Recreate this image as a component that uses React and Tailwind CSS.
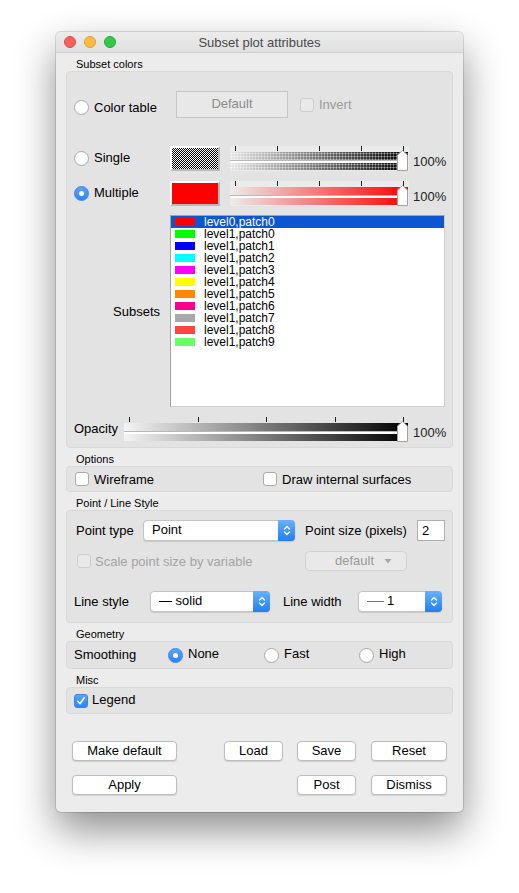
import React from "react";

function Radio({ checked }) {
  if (checked) {
    return (
      <div className="w-[15px] h-[15px] rounded-full bg-[linear-gradient(#5ba5fb,#2d84f6)] border border-[#3a84e8] flex items-center justify-center shrink-0">
        <div className="w-[5px] h-[5px] rounded-full bg-white" />
      </div>
    );
  }
  return (
    <div className="w-[15px] h-[15px] rounded-full bg-white border border-[#a9a9a9] shadow-[inset_0_-1px_0_rgba(0,0,0,0.04)] shrink-0" />
  );
}

function Checkbox({ checked, disabled, cls = "" }) {
  if (checked) {
    return (
      <div className={"w-[14px] h-[14px] rounded-[3px] bg-[linear-gradient(#5ba5fb,#2d84f6)] border border-[#3a84e8] flex items-center justify-center shrink-0 " + cls}>
        <svg width="10" height="10" viewBox="0 0 10 10">
          <path d="M1.8 5.2 L4 7.8 L8.3 1.8" fill="none" stroke="white" strokeWidth="1.5" strokeLinecap="round" strokeLinejoin="round" />
        </svg>
      </div>
    );
  }
  return (
    <div
      className={
        "w-[14px] h-[14px] rounded-[3px] border shrink-0 " +
        (disabled ? "bg-[#e9e9e9] border-[#cdcdcd] " : "bg-white border-[#acacac] ") +
        cls
      }
    />
  );
}

function Stepper() {
  return (
    <div className="w-[17px] self-stretch rounded-r-[4px] bg-[linear-gradient(#69b1fb,#1f7ff6)] flex items-center justify-center -mr-px -my-px">
      <svg width="8" height="13" viewBox="0 0 8 13">
        <path d="M1.5 5 L4 2.5 L6.5 5" fill="none" stroke="white" strokeWidth="1.2" strokeLinecap="round" strokeLinejoin="round" />
        <path d="M1.5 8 L4 10.5 L6.5 8" fill="none" stroke="white" strokeWidth="1.2" strokeLinecap="round" strokeLinejoin="round" />
      </svg>
    </div>
  );
}

function Combo({ w, children }) {
  return (
    <div className={"h-[21px] flex items-center bg-white rounded-[4px] border border-[#c4c4c4] shadow-[0_1px_1px_rgba(0,0,0,0.12)] " + w}>
      <div className="flex-1 flex items-center text-[13px] leading-[15px] text-black pl-[8px] pb-[3px]">{children}</div>
      <Stepper />
    </div>
  );
}

function Handle() {
  return (
    <svg className="absolute right-0 top-[-2px]" width="11" height="21" viewBox="0 0 11 21">
      <polygon points="0.5,5 5.5,0.5 10.5,5 10.5,20.5 0.5,20.5" fill="#fdfdfd" stroke="#a2a2a2" strokeWidth="1" />
    </svg>
  );
}

function Slider({ w, band, light }) {
  return (
    <div className={"flex flex-col h-[25px] " + w + (light ? " bg-[#ebebeb]" : "")}>
      <div className="h-[5px] flex justify-between px-[5px]">
        <div className="w-px h-[5px] bg-[#222]" />
        <div className="w-px h-[5px] bg-[#222]" />
        <div className="w-px h-[5px] bg-[#222]" />
        <div className="w-px h-[5px] bg-[#222]" />
        <div className="w-px h-[5px] bg-[#222]" />
      </div>
      <div className="relative mt-[1px] mr-[1px] flex flex-col">
        <div className={"h-[8px] " + band} />
        <div className="h-[3px] bg-white border-t border-[#b8b8b8]" />
        <div className={"h-[7px] " + band} />
        <Handle />
      </div>
    </div>
  );
}

function Swatch({ inner }) {
  return (
    <div className="w-[50px] h-[25px] border-2 border-t-white border-l-white border-r-[#b9b9b9] border-b-[#b9b9b9] shrink-0">
      <div className={"w-full h-full " + inner} />
    </div>
  );
}

function Button({ w, children, cls = "" }) {
  return (
    <div className={"h-[20px] bg-white rounded-[4px] border border-[#bdbdbd] shadow-[0_1px_1px_rgba(0,0,0,0.12)] flex items-center justify-center text-[13px] leading-[15px] text-black pb-[2px] " + w + " " + cls}>
      {children}
    </div>
  );
}

function GroupLabel({ children }) {
  return (
    <div className="h-[18px] flex items-end pl-[10px]">
      <span className="text-[11px] leading-[13px] text-black">{children}</span>
    </div>
  );
}

const items = [
  ["level0,patch0", "bg-[#ff0000]"],
  ["level1,patch0", "bg-[#00ff00]"],
  ["level1,patch1", "bg-[#0000ff]"],
  ["level1,patch2", "bg-[#00ffff]"],
  ["level1,patch3", "bg-[#ff00ff]"],
  ["level1,patch4", "bg-[#ffff00]"],
  ["level1,patch5", "bg-[#ff8800]"],
  ["level1,patch6", "bg-[#ff0088]"],
  ["level1,patch7", "bg-[#a8a8a8]"],
  ["level1,patch8", "bg-[#ff4444]"],
  ["level1,patch9", "bg-[#66ff66]"],
];

export default function App() {
  const box = "bg-[#e3e3e3] border border-[#d9d9d9] rounded-[4px]";
  return (
    <div className="min-h-[893px] bg-white pt-[32px] pl-[56px] font-['Liberation_Sans',Arial,sans-serif] text-black">
      <div className="w-[407px] h-[780px] rounded-[5px] bg-[#ececec] shadow-[0_0_0_1px_rgba(0,0,0,0.12),0_18px_40px_rgba(0,0,0,0.45)] flex flex-col overflow-hidden">
        {/* title bar */}
        <div className="h-[21px] shrink-0 border-b border-[#cfcfcf] bg-[linear-gradient(#ececec,#e0e0e0)] flex items-center relative">
          <div className="flex items-center gap-[8px] pl-[8px]">
            <div className="w-[12px] h-[12px] rounded-full bg-[#fc605c] border border-[#de4a45]" />
            <div className="w-[12px] h-[12px] rounded-full bg-[#fdbc40] border border-[#dea236]" />
            <div className="w-[12px] h-[12px] rounded-full bg-[#34c84a] border border-[#27aa35]" />
          </div>
          <div className="absolute inset-0 flex items-center justify-center text-[13px] leading-[15px] text-[#4a4a4a] pt-[1px] pointer-events-none">
            Subset plot attributes
          </div>
        </div>

        <div className="px-[10px] flex flex-col">
          <GroupLabel>Subset colors</GroupLabel>
          <div className={box + " h-[377px] flex flex-col pl-[7px]"}>
            {/* color table row */}
            <div className="mt-[19px] h-[27px] flex items-start">
              <div className="w-[96px] flex items-center gap-[5px] mt-[9px]">
                <Radio />
                <span className="text-[13px] leading-[15px]">Color table</span>
              </div>
              <div className="w-[112px] h-[27px] border border-[#c6c6c6] bg-[#e8e8e8] flex items-center justify-center text-[13px] leading-[15px] text-[#8c8c8c] pb-[2px] ml-[6px]">
                Default
              </div>
              <div className="flex items-center gap-[5px] ml-[12px] mt-[6px]">
                <Checkbox disabled />
                <span className="text-[13px] leading-[15px] text-[#9a9a9a]">Invert</span>
              </div>
            </div>

            {/* single row */}
            <div className="mt-[28px] h-[25px] flex items-center">
              <div className="w-[96px] flex items-center gap-[5px]">
                <Radio />
                <span className="text-[13px] leading-[15px] -mt-[3px]">Single</span>
              </div>
              <Swatch inner="bg-[image:repeating-conic-gradient(#000_0%_25%,#fff_0%_50%)] bg-[length:2px_2px]" />
              <div className="ml-[10px]">
                <Slider
                  w="w-[179px]"
                  light
                  band="bg-[image:radial-gradient(circle,rgba(255,255,255,0.6)_0.9px,transparent_1.1px),linear-gradient(to_right,#e6e6e6,#000)] bg-[length:3px_3px,100%_100%]"
                />
              </div>
              <span className="ml-[4px] mt-[6px] text-[13px] leading-[15px] text-[#222]">100%</span>
            </div>

            {/* multiple row */}
            <div className="mt-[10px] h-[25px] flex items-center">
              <div className="w-[96px] flex items-center gap-[5px]">
                <Radio checked />
                <span className="text-[13px] leading-[15px] -mt-[3px]">Multiple</span>
              </div>
              <Swatch inner="bg-[#ff0000]" />
              <div className="ml-[10px]">
                <Slider w="w-[179px]" light band="bg-[linear-gradient(to_right,#ececec,#ff0000)]" />
              </div>
              <span className="ml-[4px] mt-[6px] text-[13px] leading-[15px] text-[#222]">100%</span>
            </div>

            {/* subsets list */}
            <div className="mt-[9px] h-[192px] flex items-center">
              <div className="w-[96px] flex justify-end pr-[10px]">
                <span className="text-[13px] leading-[15px]">Subsets</span>
              </div>
              <div className="w-[275px] h-[192px] bg-white border border-[#a3a3a3] border-r-[#cfcfcf] border-b-[#cfcfcf] flex flex-col">
                {items.map(([name, c], i) => (
                  <div
                    key={name}
                    className={"h-[12px] flex items-center pl-[4px] " + (i === 0 ? "bg-[#0c56d0] text-white" : "text-black")}
                  >
                    <div className={"w-[20px] h-[8px] " + c} />
                    <span className="block ml-[9px] text-[12px] leading-[12px] h-[12px]">{name}</span>
                  </div>
                ))}
              </div>
            </div>

            {/* opacity */}
            <div className="mt-[10px] h-[25px] flex items-center">
              <span className="w-[50px] text-[13px] leading-[15px] -mt-[3px]">Opacity</span>
              <Slider w="w-[285px]" band="bg-[linear-gradient(to_right,#f4f4f4,#000)]" />
              <span className="ml-[4px] mt-[6px] text-[13px] leading-[15px] text-[#222]">100%</span>
            </div>
          </div>

          <GroupLabel>Options</GroupLabel>
          <div className={box + " h-[26px] flex items-center pl-[8px]"}>
            <div className="w-[188px] flex items-center gap-[5px]">
              <Checkbox />
              <span className="text-[13px] leading-[15px]">Wireframe</span>
            </div>
            <div className="flex items-center gap-[5px]">
              <Checkbox />
              <span className="text-[13px] leading-[15px]">Draw internal surfaces</span>
            </div>
          </div>

          <GroupLabel>Point / Line Style</GroupLabel>
          <div className={box + " h-[113px] flex flex-col"}>
            <div className="mt-[9px] h-[21px] flex items-center pl-[9px]">
              <span className="w-[67px] text-[13px] leading-[15px]">Point type</span>
              <Combo w="w-[152px]">Point</Combo>
              <span className="ml-[10px] w-[112px] text-[13px] leading-[15px]">Point size (pixels)</span>
              <div className="w-[28px] h-[21px] bg-white border border-[#b0b0b0] flex items-center pl-[4px] text-[13px] leading-[15px]">2</div>
            </div>
            <div className="mt-[10px] h-[20px] flex items-center pl-[10px]">
              <Checkbox disabled />
              <span className="ml-[4px] w-[210px] text-[13px] leading-[15px] text-[#a3a3a3]">Scale point size by variable</span>
              <div className="w-[102px] h-[20px] rounded-[4px] bg-[#e9e9e9] border border-[#d3d3d3] flex items-center pl-[29px] text-[13px] leading-[15px] text-[#9a9a9a]">
                <span className="pb-[2px]">default</span>
                <svg className="ml-[10px]" width="8" height="6" viewBox="0 0 8 6">
                  <polygon points="0.5,1 7.5,1 4,5.5" fill="#a8a8a8" />
                </svg>
              </div>
            </div>
            <div className="mt-[20px] h-[21px] flex items-center pl-[7px]">
              <span className="w-[76px] text-[13px] leading-[15px]">Line style</span>
              <Combo w="w-[120px]">— solid</Combo>
              <span className="ml-[13px] w-[75px] text-[13px] leading-[15px]">Line width</span>
              <Combo w="w-[84px]">
                <span className="w-[17px] h-px bg-[#777] mt-[2px]" />
                <span className="ml-[3px]">1</span>
              </Combo>
            </div>
          </div>

          <GroupLabel>Geometry</GroupLabel>
          <div className={box + " h-[28px] flex items-center pl-[7px]"}>
            <span className="w-[94px] text-[13px] leading-[15px] -mt-[2px]">Smoothing</span>
            <div className="w-[96px] flex items-center gap-[5px]">
              <Radio checked />
              <span className="text-[13px] leading-[15px] -mt-[3px]">None</span>
            </div>
            <div className="w-[95px] flex items-center gap-[5px]">
              <Radio />
              <span className="text-[13px] leading-[15px] -mt-[3px]">Fast</span>
            </div>
            <div className="flex items-center gap-[5px]">
              <Radio />
              <span className="text-[13px] leading-[15px] -mt-[3px]">High</span>
            </div>
          </div>

          <GroupLabel>Misc</GroupLabel>
          <div className={box + " h-[27px] flex items-center pl-[7px]"}>
            <Checkbox checked />
            <span className="ml-[4px] text-[13px] leading-[15px] -mt-[2px]">Legend</span>
          </div>

          {/* buttons */}
          <div className="mt-[27px] flex items-center pl-[6px]">
            <Button w="w-[105px]">Make default</Button>
            <Button w="w-[59px]" cls="ml-[47px]">Load</Button>
            <Button w="w-[59px]" cls="ml-[14px]">Save</Button>
            <Button w="w-[76px]" cls="ml-[15px]">Reset</Button>
          </div>
          <div className="mt-[14px] flex items-center pl-[6px]">
            <Button w="w-[105px]">Apply</Button>
            <Button w="w-[59px]" cls="ml-[120px]">Post</Button>
            <Button w="w-[76px]" cls="ml-[15px]">Dismiss</Button>
          </div>
        </div>
      </div>
    </div>
  );
}
